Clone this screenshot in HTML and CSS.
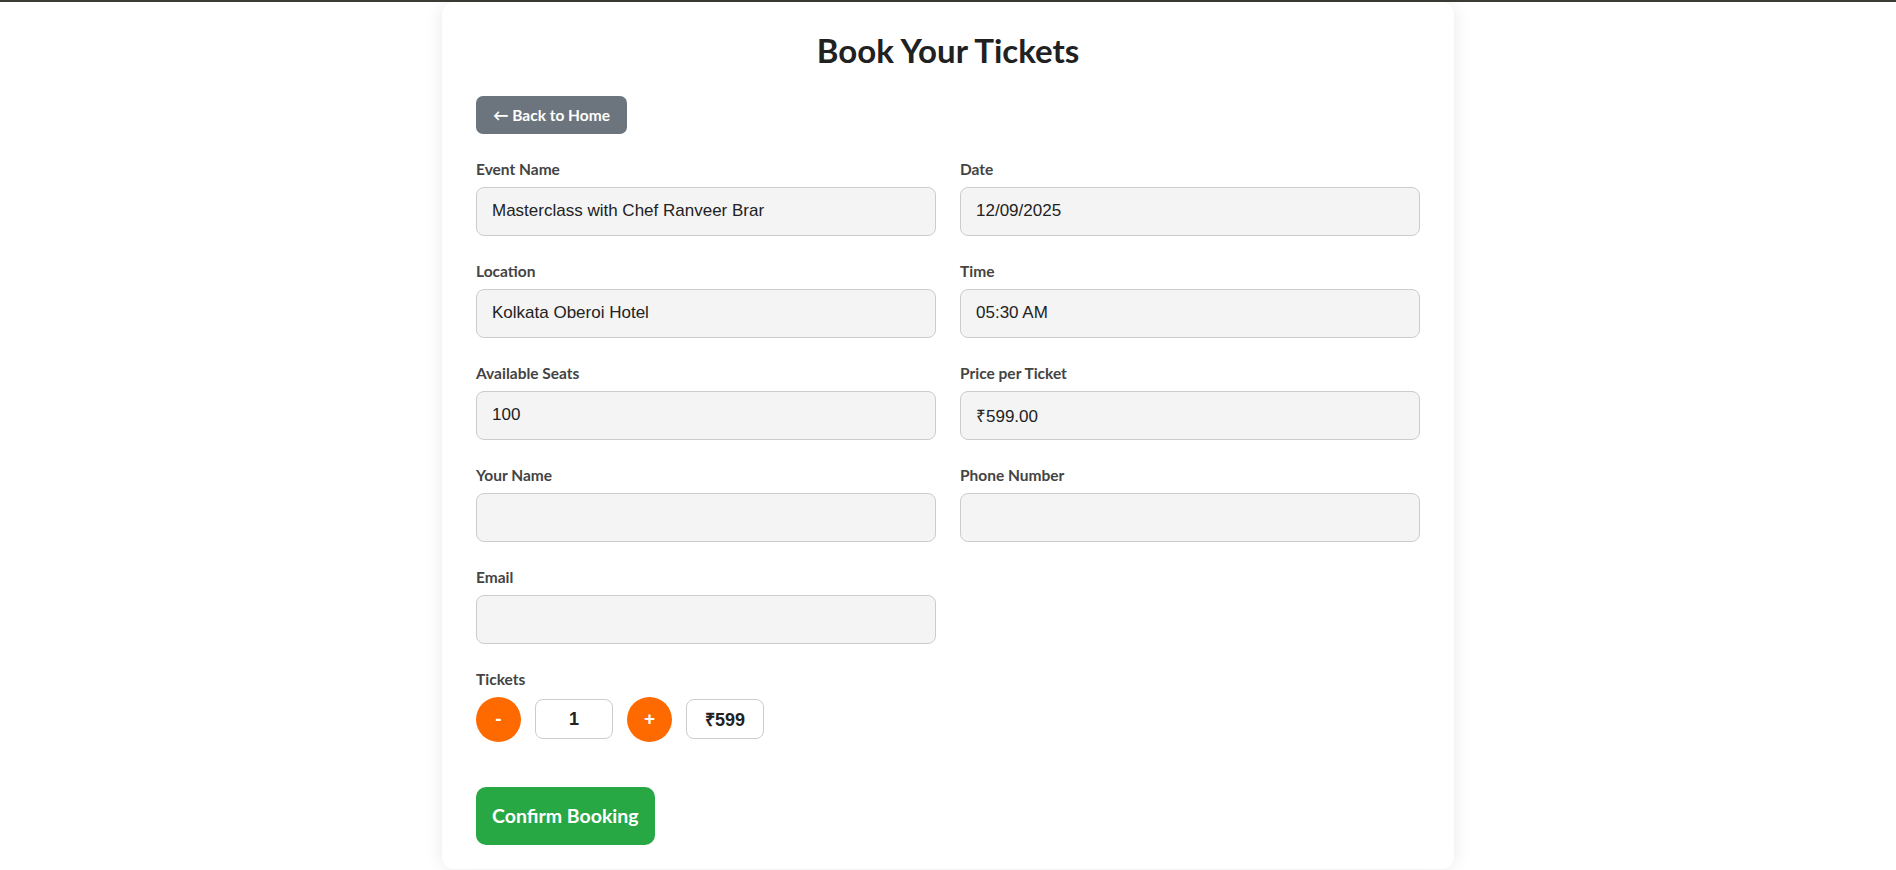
FILE: index.html
```html
<!DOCTYPE html>
<html lang="en">
<head>
<meta charset="utf-8">
<title>Book Your Tickets</title>
<link rel="stylesheet" href="styles.css">
</head>
<body>
<div class="topbar"></div>
<main class="card">
  <h1 class="title">Book Your Tickets</h1>
  <a class="back-btn" href="#">← Back to Home</a>
  <form class="form-grid">
    <div class="field">
      <label class="label">Event Name</label>
      <input class="input" type="text" value="Masterclass with Chef Ranveer Brar" readonly>
    </div>
    <div class="field">
      <label class="label">Date</label>
      <input class="input" type="text" value="12/09/2025" readonly>
    </div>
    <div class="field">
      <label class="label">Location</label>
      <input class="input" type="text" value="Kolkata Oberoi Hotel" readonly>
    </div>
    <div class="field">
      <label class="label">Time</label>
      <input class="input" type="text" value="05:30 AM" readonly>
    </div>
    <div class="field">
      <label class="label">Available Seats</label>
      <input class="input" type="text" value="100" readonly>
    </div>
    <div class="field">
      <label class="label">Price per Ticket</label>
      <input class="input" type="text" value="₹599.00" readonly>
    </div>
    <div class="field">
      <label class="label">Your Name</label>
      <input class="input" type="text">
    </div>
    <div class="field">
      <label class="label">Phone Number</label>
      <input class="input" type="text">
    </div>
    <div class="field">
      <label class="label">Email</label>
      <input class="input" type="text">
    </div>
    <div class="field field-full">
      <label class="label">Tickets</label>
      <div class="tickets">
        <button type="button" class="circle-btn">-</button>
        <div class="qty-box">1</div>
        <button type="button" class="circle-btn">+</button>
        <div class="qty-box">₹599</div>
      </div>
    </div>
  </form>
  <button type="button" class="confirm-btn">Confirm Booking</button>
</main>
</body>
</html>
```
FILE: styles.css
```css
* { box-sizing: border-box; }
html, body { margin: 0; padding: 0; background: #ffffff; }
body {
  font-family: Lato, "Open Sans", sans-serif;
  color: #222;
  height: 870px;
  overflow: hidden;
}
.topbar {
  height: 2px;
  background: #3a3d36;
}
.card {
  width: 1012px;
  margin: 0 auto;
  background: #fff;
  border-radius: 12px;
  box-shadow: 0 0 18px rgba(0, 0, 0, 0.09);
  padding: 29px 34px 24px;
}
.title {
  margin: 0 0 25px;
  text-align: center;
  font-size: 33px;
  line-height: 1.2;
  font-weight: 700;
  color: #212121;
}
.back-btn {
  display: inline-flex;
  align-items: center;
  height: 38px;
  padding: 0 17px;
  background: #6c757d;
  color: #fff;
  font-size: 15.5px;
  font-weight: 700;
  text-decoration: none;
  border-radius: 7px;
}
.form-grid {
  display: grid;
  grid-template-columns: 460px 460px;
  column-gap: 24px;
  row-gap: 26px;
  margin-top: 26px;
}
.field { display: flex; flex-direction: column; }
.field-full { grid-column: 1 / -1; }
.label {
  font-size: 15.5px;
  line-height: 18px;
  font-weight: 700;
  color: #444;
  margin-bottom: 9px;
}
.input {
  height: 49px;
  padding: 0 15px;
  border: 1px solid #cccccc;
  border-radius: 8px;
  background: #f4f4f4;
  font-family: "Liberation Sans", Arial, sans-serif;
  font-size: 17px;
  color: #222;
  outline: none;
}
.tickets {
  display: flex;
  align-items: center;
  gap: 14px;
}
.circle-btn {
  width: 45px;
  height: 45px;
  border-radius: 50%;
  border: none;
  background: #ff6a00;
  color: #fff;
  font-family: "Liberation Sans", Arial, sans-serif;
  font-size: 19px;
  font-weight: 700;
  padding: 0;
}
.qty-box {
  width: 78px;
  height: 40px;
  display: flex;
  align-items: center;
  justify-content: center;
  border: 1px solid #cccccc;
  border-radius: 8px;
  background: #fff;
  font-family: "Liberation Sans", Arial, sans-serif;
  font-size: 18px;
  font-weight: 700;
  color: #222;
}
.confirm-btn {
  display: block;
  margin-top: 45px;
  height: 58px;
  padding: 0 16px;
  border: none;
  border-radius: 10px;
  background: #28a745;
  color: #fff;
  font-family: Lato, "Open Sans", sans-serif;
  font-size: 19.5px;
  font-weight: 700;
}
```
